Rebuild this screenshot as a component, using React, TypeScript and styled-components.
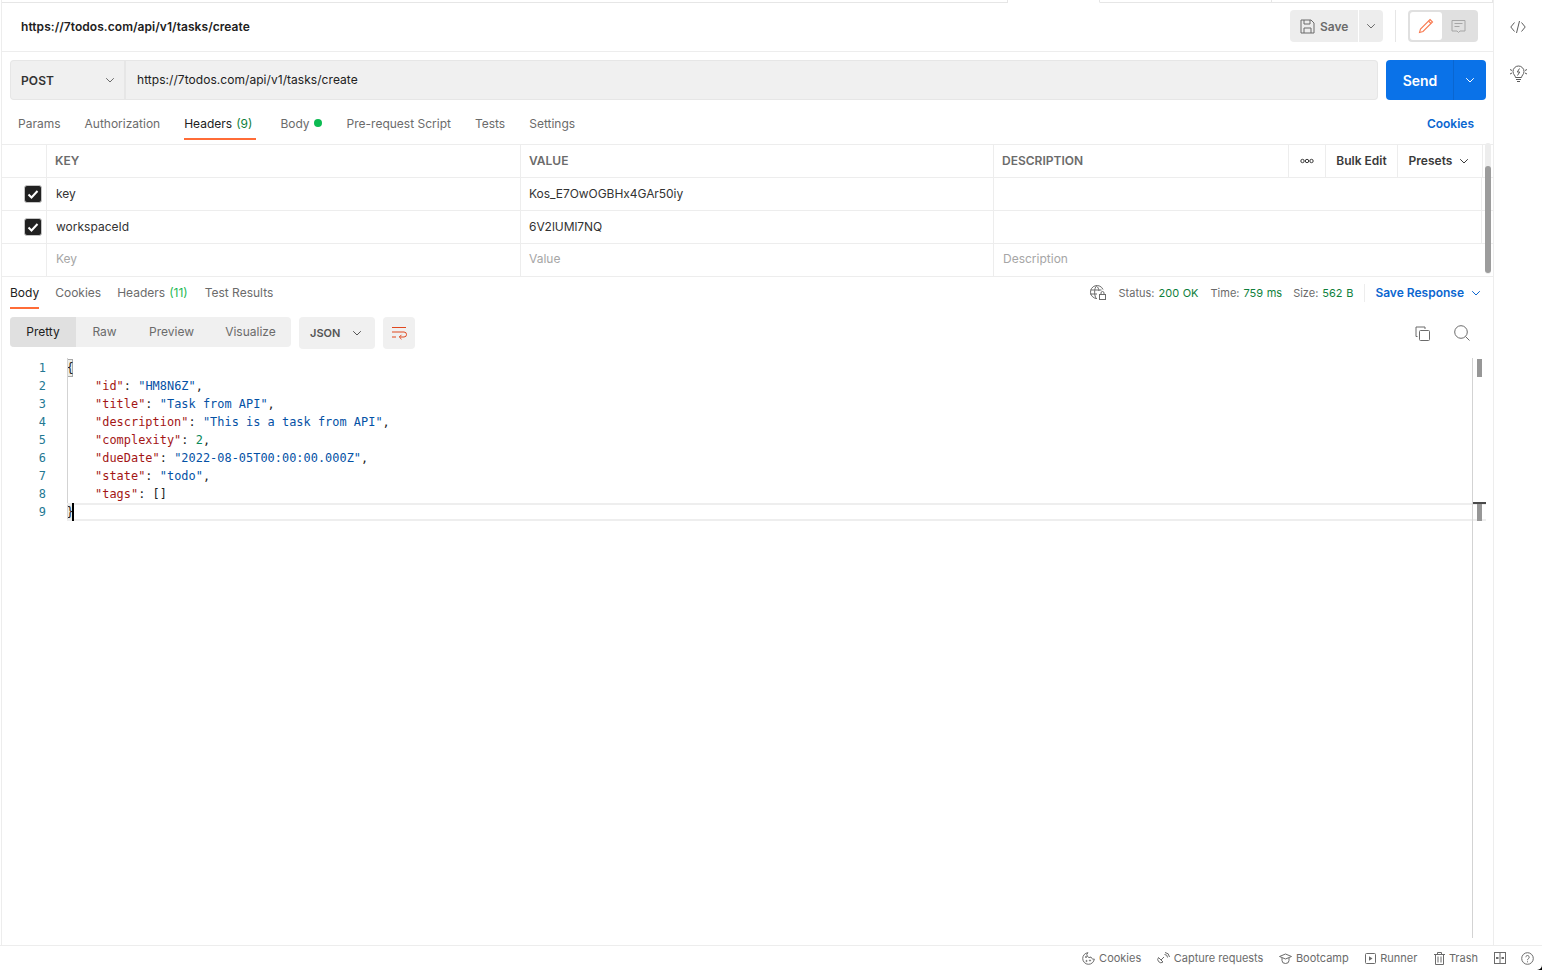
import * as React from 'react';
import styled, { createGlobalStyle } from 'styled-components';

const GlobalStyle = createGlobalStyle`
    html, body {
        margin: 0;
        padding: 0;
        background: #fff;
    }
    body {
        font-family: Inter, "Noto Sans", sans-serif;
        font-size: 12px;
        color: #212121;
        overflow: hidden;
    }
    * {
        box-sizing: border-box;
    }
    svg {
        display: block;
        flex: none;
    }
`;

const Page = styled.div`
    width: 1542px;
    height: 970px;
    display: flex;
    flex-direction: column;
    position: relative;
    overflow: hidden;
`;

const Main = styled.div`
    flex: 1;
    min-height: 0;
    display: flex;
`;

const Workspace = styled.div`
    flex: 1;
    min-width: 0;
    margin-left: 1px;
    border-left: 1px solid #ededed;
    border-right: 1px solid #ededed;
    display: flex;
    flex-direction: column;
`;

const Sidebar = styled.div`
    width: 48px;
    flex: none;
    display: flex;
    flex-direction: column;
    align-items: center;
    padding-top: 19px;
    gap: 30px;
    color: #5c5c5c;
`;

// Top strip: the open tabs just above the request, only their bottom edge is visible.
const TabStrip = styled.div`
    height: 3px;
    flex: none;
    display: flex;
`;

const StripTab = styled.div<{ $width: number; $active?: boolean }>`
    width: ${(p) => p.$width}px;
    flex: ${(p) => (p.$width ? 'none' : '1')};
    border-right: 1px solid #e6e6e6;
    border-bottom: 1px solid ${(p) => (p.$active ? 'transparent' : '#e6e6e6')};
`;

const RequestHeader = styled.div`
    height: 49px;
    flex: none;
    border-bottom: 1px solid #ededed;
    display: flex;
    align-items: center;
    padding: 0 15px 2px 19px;
`;

const RequestName = styled.div`
    flex: 1;
    font-weight: 600;
    font-size: 12px;
    letter-spacing: 0.05px;
    color: #212121;
`;

const SaveGroup = styled.div`
    display: flex;
    gap: 1px;
    height: 32px;
`;

const SaveButton = styled.div`
    width: 68px;
    display: flex;
    align-items: center;
    gap: 5px;
    padding-left: 10px;
    background: #ededed;
    border-radius: 4px 0 0 4px;
    color: #6b6b6b;
    font-weight: 600;
`;

const SaveArrow = styled.div`
    width: 24px;
    display: flex;
    align-items: center;
    justify-content: center;
    background: #ededed;
    border-radius: 0 4px 4px 0;
    color: #6b6b6b;
`;

const VerticalRule = styled.div<{ $height: number; $margin: string }>`
    width: 1px;
    height: ${(p) => p.$height}px;
    margin: ${(p) => p.$margin};
    background: #e6e6e6;
`;

const ModeSwitch = styled.div`
    width: 70px;
    height: 32px;
    padding: 2px;
    background: #e0e0e0;
    border-radius: 4px;
    display: flex;
`;

const ModeOption = styled.div<{ $active?: boolean }>`
    width: 32px;
    display: flex;
    align-items: center;
    justify-content: center;
    background: ${(p) => (p.$active ? '#fff' : 'transparent')};
    border-radius: 3px;
    color: ${(p) => (p.$active ? '#f87a50' : '#a6a6a6')};
`;

const UrlRow = styled.div`
    height: 48px;
    flex: none;
    padding: 8px 7px 0 8px;
    display: flex;
`;

const MethodSelect = styled.div`
    width: 116px;
    height: 40px;
    display: flex;
    align-items: center;
    justify-content: space-between;
    padding: 0 9px 0 10px;
    background: #f0f0f0;
    border: 1px solid #e6e6e6;
    border-right: 2px solid #e6e6e6;
    border-radius: 4px 0 0 4px;
    font-weight: 600;
    font-size: 12px;
    letter-spacing: 0.1px;
    color: #333;
    > svg {
        color: #6b6b6b;
    }
`;

const UrlInput = styled.div`
    flex: 1;
    height: 40px;
    display: flex;
    align-items: center;
    padding: 0 0 2px 11px;
    background: #f0f0f0;
    border: 1px solid #e6e6e6;
    border-left: 0;
    border-radius: 0 4px 4px 0;
    font-size: 12px;
    letter-spacing: 0.05px;
    color: #212121;
`;

const SendButton = styled.div`
    width: 100px;
    height: 40px;
    margin-left: 8px;
    display: flex;
    background: #0a72e8;
    border-radius: 4px;
    color: #fff;
`;

const SendLabel = styled.div`
    width: 68px;
    display: flex;
    align-items: center;
    justify-content: center;
    padding-left: 1px;
    font-size: 14px;
    font-weight: 600;
    border-right: 1px solid #0a66d0;
`;

const SendArrow = styled.div`
    flex: 1;
    display: flex;
    align-items: center;
    justify-content: center;
`;

const RequestTabs = styled.div`
    height: 45px;
    flex: none;
    display: flex;
    align-items: flex-start;
    padding: 0 19px 0 16px;
    gap: 24px;
    border-bottom: 1px solid #ededed;
`;

const Tab = styled.div<{ $active?: boolean }>`
    display: flex;
    align-items: center;
    padding-top: 6px;
    height: 40px;
    position: relative;
    color: ${(p) => (p.$active ? '#212121' : '#6b6b6b')};
    gap: 4px;
    white-space: nowrap;
`;

const TabUnderline = styled.div`
    position: absolute;
    left: 0;
    right: 0;
    bottom: 0;
    height: 2px;
    background: #ff6c37;
`;

const TabCount = styled.span<{ $bright?: boolean; $trail?: number }>`
    color: ${(p) => (p.$bright ? '#1db954' : '#0f7f3c')};
    margin-right: ${(p) => p.$trail ?? 0}px;
`;

const BodyDot = styled.span`
    width: 8px;
    height: 8px;
    margin-right: 1px;
    border-radius: 50%;
    background: #0cbb52;
`;

const TabLink = styled.div`
    margin-left: auto;
    height: 40px;
    padding-top: 6px;
    display: flex;
    align-items: center;
    color: #0a66d0;
    font-weight: 600;
`;

const TableArea = styled.div`
    height: 132px;
    flex: none;
    position: relative;
    border-bottom: 1px solid #ededed;
`;

const TableRow = styled.div<{ $columns: string }>`
    height: 33px;
    display: grid;
    grid-template-columns: ${(p) => p.$columns};
    border-bottom: 1px solid #ededed;
`;

const LastTableRow = styled(TableRow)`
    border-bottom: 0;
`;

const Cell = styled.div`
    display: flex;
    align-items: center;
    padding-left: 9px;
    padding-bottom: 2px;
    color: #333;
    border-right: 1px solid #ededed;
    white-space: nowrap;
`;

const EndCell = styled(Cell)`
    border-right: 0;
`;

const ValueCell = styled(Cell)`
    padding-left: 8px;
    letter-spacing: -0.05px;
`;

const CheckCell = styled(Cell)`
    justify-content: center;
    padding: 0 0 0 18px;
`;

const HeadCell = styled(Cell)`
    font-weight: 600;
    color: #6b6b6b;
    padding-left: 8px;
    padding-bottom: 1px;
`;

const HeadAction = styled(HeadCell)`
    color: #3a3a3a;
    justify-content: center;
    padding-left: 0;
    gap: 7px;
`;

const PresetAction = styled(HeadAction)`
    padding-right: 2px;
`;

const Placeholder = styled(Cell)`
    color: #a6a6a6;
    padding-bottom: 4px;
`;

const ValuePlaceholder = styled(Placeholder)`
    padding-left: 8px;
`;

const PlaceholderEnd = styled(Placeholder)`
    border-right: 0;
`;

const CheckBox = styled.div`
    width: 18px;
    height: 18px;
    border-radius: 3px;
    background: #212121;
    border: 1px solid #c4c4c4;
    display: flex;
    align-items: center;
    justify-content: center;
    color: #fff;
`;

const TableThumb = styled.div`
    position: absolute;
    right: 2px;
    top: -2px;
    bottom: 2px;
    width: 6px;
    background: #ededed;
    border-radius: 3px;
`;

const TableThumbFill = styled.div`
    position: absolute;
    left: 0;
    right: 0;
    top: 23px;
    bottom: 1px;
    background: #9c9c9c;
    border-radius: 3px;
`;

const ResponseHeader = styled.div`
    height: 32px;
    flex: none;
    display: flex;
    padding: 0 12px 0 8px;
    gap: 16px;
`;

const ResponseTab = styled.div<{ $active?: boolean }>`
    height: 32px;
    display: flex;
    align-items: center;
    padding-bottom: 2px;
    gap: 4px;
    position: relative;
    color: ${(p) => (p.$active ? '#212121' : '#6b6b6b')};
`;

const ResponseMeta = styled.div`
    margin-left: auto;
    display: flex;
    align-items: center;
    padding-bottom: 1px;
    font-size: 11px;
    color: #6b6b6b;
`;

const MetaItem = styled.span<{ $gap?: number }>`
    margin-right: ${(p) => p.$gap ?? 11}px;
    white-space: nowrap;
`;

const MetaValue = styled.span`
    color: #0f7f3c;
    margin-left: 4px;
    word-spacing: 0.5px;
`;

const SaveResponse = styled.div`
    display: flex;
    align-items: center;
    gap: 7px;
    padding-left: 10px;
    height: 18px;
    border-left: 1px solid #ededed;
    color: #0a66d0;
    font-size: 12px;
    font-weight: 600;
`;

const ViewBar = styled.div`
    height: 49px;
    flex: none;
    padding: 8px 23px 0 8px;
    display: flex;
    align-items: flex-start;
`;

const Segmented = styled.div`
    height: 30px;
    display: flex;
    background: #f0f0f0;
    border-radius: 4px;
    overflow: hidden;
`;

const Segment = styled.div<{ $active?: boolean; $width: number }>`
    width: ${(p) => p.$width}px;
    display: flex;
    align-items: center;
    justify-content: center;
    padding-bottom: 1px;
    background: ${(p) => (p.$active ? '#e0e0e0' : 'transparent')};
    color: ${(p) => (p.$active ? '#212121' : '#6b6b6b')};
`;

const FormatSelect = styled.div`
    width: 76px;
    height: 32px;
    margin-left: 8px;
    display: flex;
    align-items: center;
    justify-content: space-between;
    padding: 0 13px 0 11px;
    background: #f0f0f0;
    border-radius: 4px;
    font-size: 11px;
    font-weight: 600;
    color: #555;
`;

const WrapButton = styled.div`
    width: 32px;
    height: 32px;
    margin-left: 8px;
    display: flex;
    align-items: center;
    justify-content: center;
    background: #f0f0f0;
    border-radius: 4px;
    color: #e0481f;
`;

const ViewActions = styled.div`
    margin-left: auto;
    height: 32px;
    display: flex;
    align-items: center;
    gap: 24px;
    color: #6b6b6b;
`;

const Editor = styled.div`
    flex: 1;
    min-height: 0;
    position: relative;
    padding-bottom: 7px;
`;

const CodeLines = styled.div`
    font-family: "DejaVu Sans Mono", "Liberation Mono", monospace;
    font-size: 11.9px;
    letter-spacing: 0.03px;
    line-height: 18px;
    padding-top: 1px;
`;

const CodeLine = styled.div`
    height: 18px;
    display: flex;
    white-space: pre;
    color: #212121;
`;

const LineNumber = styled.div`
    width: 44px;
    flex: none;
    text-align: right;
    color: #237893;
`;

const LineText = styled.div<{ $indent?: boolean }>`
    margin-left: 20px;
    padding-left: ${(p) => (p.$indent ? '29px' : '0')};
    position: relative;
`;

const KeyToken = styled.span`
    color: #a31515;
`;

const StringToken = styled.span`
    color: #0451a5;
`;

const NumberToken = styled.span`
    color: #09885a;
`;

const BracketToken = styled.span`
    display: inline-block;
    width: 6px;
    height: 18px;
    margin-left: 1px;
    text-indent: -0.5px;
    background: #eceeea;
    box-shadow: inset 0 0 0 1px #a9a9a9;
    overflow: hidden;
    line-height: 18px;
`;

// Everything below sits over the code, the way the editor paints its own overlays.
const IndentGuide = styled.div`
    position: absolute;
    left: 65px;
    top: 0;
    width: 1px;
    height: 162px;
    background: #d3d3d3;
`;

const CurrentLine = styled.div`
    position: absolute;
    left: 65px;
    right: 7px;
    top: 145px;
    height: 18px;
    border-top: 2px solid #eee;
    border-bottom: 2px solid #eee;
`;

const Caret = styled.div`
    position: absolute;
    left: 70px;
    top: 145px;
    width: 2px;
    height: 18px;
    background: #000;
`;

const OverviewRuler = styled.div`
    position: absolute;
    left: 1470px;
    top: 0;
    bottom: 7px;
    width: 14px;
    border-left: 1px solid #d3d3d3;
`;

const RulerMark = styled.div<{ $top: number }>`
    position: absolute;
    left: 4px;
    top: ${(p) => p.$top}px;
    width: 5px;
    height: 18px;
    background: #979797;
`;

const RulerCursor = styled.div`
    position: absolute;
    left: 0;
    right: 0;
    top: 144px;
    height: 2px;
    background: #4a4a4a;
`;

const StatusBar = styled.div`
    height: 25px;
    flex: none;
    border-top: 1px solid #ededed;
    display: flex;
    align-items: center;
    justify-content: flex-end;
    padding: 0 8px 0 0;
    gap: 15.5px;
    font-size: 11px;
    color: #6b6b6b;
`;

const StatusItem = styled.div`
    display: flex;
    align-items: center;
    gap: 4px;
    white-space: nowrap;
`;

const WindowCorner = styled.div`
    position: absolute;
    right: 0;
    bottom: 0;
    width: 5px;
    height: 5px;
    background: #000;
    clip-path: path('M5 0 A5 5 0 0 1 0 5 L5 5 Z');
`;

const Chevron = ({ size = 10 }: { size?: number }) => (
    <svg width={size} height={size} viewBox="0 0 10 10" fill="none" stroke="currentColor" strokeWidth="1">
        <path d="M1.2 3.2 5 7l3.8-3.8" />
    </svg>
);

const FileIcon = () => (
    <svg width="15" height="15" viewBox="0 0 15 15" fill="none" stroke="currentColor" strokeWidth="1">
        <path d="M1 1h10l3 3v10H1z" />
        <path d="M4 1v4h6V1M4 14V9h7v5" />
    </svg>
);

const PencilIcon = () => (
    <svg width="16" height="16" viewBox="0 0 16 16" fill="none" stroke="currentColor" strokeWidth="1.1">
        <path d="M12 1.5 14.5 4 5 13.5 1.5 14.5 2.5 11z" />
        <path d="M10.5 3 13 5.5" />
    </svg>
);

const CommentIcon = () => (
    <svg width="15" height="15" viewBox="0 0 15 15" fill="none" stroke="currentColor" strokeWidth="1">
        <path d="M1 1.5h13v10.5H9l-1.5 1.5L6 12H1z" />
        <path d="M3.5 4.5h8M3.5 7.5h5" />
    </svg>
);

const CodeIcon = () => (
    <svg width="16" height="16" viewBox="0 0 16 16" fill="none" stroke="currentColor" strokeWidth="1">
        <path d="M4.5 3.5.8 8l3.7 4.5M11.5 3.5 15.2 8l-3.700 4.500M9.500 2 6.500 14" />
    </svg>
);

const BulbIcon = () => (
    <svg width="17" height="17" viewBox="0 0 17 17" fill="none" stroke="currentColor" strokeWidth="1">
        <path d="M5.5 12.5c0-2-2.500-3-2.500-6a5.500 5.500 0 0 1 11 0c0 3-2.500 4-2.500 6z" />
        <path d="M6 14.500h5M7 16.500h3" />
        <path d="M9.500 3.500 7.300 7h2.400L7.500 10.500" />
        <path d="M0 4.500l2 1M0 9l2-1M17 4.500l-2 1M17 9l-2-1" />
    </svg>
);

const CheckIcon = () => (
    <svg width="12" height="12" viewBox="0 0 12 12" fill="none" stroke="currentColor" strokeWidth="2">
        <path d="M1.5 6.500 4.500 9.500 10.500 3" />
    </svg>
);

const DotsIcon = () => (
    <svg width="14" height="6" viewBox="0 0 14 6" fill="none" stroke="currentColor" strokeWidth="1">
        <circle cx="2.5" cy="3" r="1.7" />
        <circle cx="7" cy="3" r="1.7" />
        <circle cx="11.5" cy="3" r="1.7" />
    </svg>
);

const GlobeLockIcon = () => (
    <svg width="17" height="15" viewBox="0 0 17 15" fill="none" stroke="currentColor" strokeWidth="1">
        <path d="M8 13.500a6.500 6.500 0 1 1 6-9" />
        <path d="M7.500 1C5 3 5 11 7.500 14M7.500 1c1.500 1 2.300 3 2.500 5M1.500 5h11M1 9h7" />
        <rect x="10.5" y="9.5" width="6" height="5" />
        <path d="M12 9.500V8a1.500 1.500 0 0 1 3 0v1.500" />
    </svg>
);

const WrapIcon = () => (
    <svg width="16" height="14" viewBox="0 0 16 14" fill="none" stroke="currentColor" strokeWidth="1">
        <path d="M1 1.500h14M1 6h12a2.300 2.300 0 0 1 0 5H8.500M1 11h4" />
        <path d="M10.500 8.800 8.300 11l2.200 2.200" />
    </svg>
);

const CopyIcon = () => (
    <svg width="15" height="15" viewBox="0 0 15 15" fill="none" stroke="currentColor" strokeWidth="1">
        <path d="M2.500 10.500H1V1h9v2" />
        <rect x="4.5" y="4.5" width="10" height="10" rx="1" />
    </svg>
);

const SearchIcon = () => (
    <svg width="16" height="16" viewBox="0 0 16 16" fill="none" stroke="currentColor" strokeWidth="1">
        <circle cx="7" cy="7" r="6.3" />
        <path d="M11.500 11.500 15.500 15.500" />
    </svg>
);

const CookieIcon = () => (
    <svg width="13" height="13" viewBox="0 0 13 13" fill="none" stroke="currentColor" strokeWidth="1">
        <path d="M6 .7A5.800 5.800 0 1 0 12.300 7 2.500 2.500 0 0 1 9 5 2.500 2.500 0 0 1 6 .7z" />
        <circle cx="4" cy="5" r=".6" />
        <circle cx="4.5" cy="9" r=".6" />
        <circle cx="8" cy="8.5" r=".6" />
    </svg>
);

const CaptureIcon = () => (
    <svg width="13" height="13" viewBox="0 0 13 13" fill="none" stroke="currentColor" strokeWidth="1">
        <path d="M1.500 5.500 6 10a3.200 3.200 0 0 1-4.500-4.500z" />
        <path d="M4 8 7 5M7.500 2.500a3 3 0 0 1 3 3M8 .5a5 5 0 0 1 4.500 4.500" />
    </svg>
);

const CapIcon = () => (
    <svg width="13" height="13" viewBox="0 0 13 13" fill="none" stroke="currentColor" strokeWidth="1">
        <path d="M.5 4.500 6.500 2l6 2.500-6 2.500z" />
        <path d="M3 6v2.500a3.500 3 0 0 0 7 0V6" />
    </svg>
);

const RunnerIcon = () => (
    <svg width="12" height="11" viewBox="0 0 12 11" fill="none" stroke="currentColor" strokeWidth="1">
        <rect x="1.5" y=".5" width="10" height="10" rx="1" />
        <path d="M5 3.300 8.500 5.500 5 7.700z" fill="currentColor" stroke="none" />
    </svg>
);

const TrashIcon = () => (
    <svg width="12" height="13" viewBox="0 0 12 13" fill="none" stroke="currentColor" strokeWidth="1">
        <path d="M1 2.500h11M4.500 2.500V.5h4v2M2.500 2.500v10h8v-10M5 4.500v6M8 4.500v6" />
    </svg>
);

const PaneIcon = () => (
    <svg width="12" height="12" viewBox="0 0 12 12" fill="none" stroke="currentColor" strokeWidth="1">
        <rect x=".5" y=".5" width="11" height="11" />
        <path d="M6 .5v11" />
        <path d="M2 6h2.500M7.500 6H10" strokeWidth="2" />
    </svg>
);

const HelpIcon = () => (
    <svg width="13" height="13" viewBox="0 0 13 13" fill="none" stroke="currentColor" strokeWidth="1">
        <circle cx="6.5" cy="6.5" r="5.8" />
        <path d="M4.800 5.200a1.700 1.700 0 1 1 2.700 1.400c-.7.500-1 .8-1 1.600" />
        <path d="M6.500 9.300v1" />
    </svg>
);

const tableColumns = '45px 474px 473px 295px 37px 72px 85px 10px';
const bodyColumns = '45px 474px 473px 488px 10px';

const headers = [
    { key: 'key', value: 'Kos_E7OwOGBHx4GAr50iy' },
    { key: 'workspaceId', value: '6V2lUMl7NQ' },
];

const jsonLines: [string, React.ReactNode, string?][] = [
    ['id', <StringToken>"HM8N6Z"</StringToken>, ','],
    ['title', <StringToken>"Task from API"</StringToken>, ','],
    ['description', <StringToken>"This is a task from API"</StringToken>, ','],
    ['complexity', <NumberToken>2</NumberToken>, ','],
    ['dueDate', <StringToken>"2022-08-05T00:00:00.000Z"</StringToken>, ','],
    ['state', <StringToken>"todo"</StringToken>, ','],
    ['tags', '[]'],
];

const footerItems = [
    { icon: <CookieIcon />, label: 'Cookies' },
    { icon: <CaptureIcon />, label: 'Capture requests' },
    { icon: <CapIcon />, label: 'Bootcamp' },
    { icon: <RunnerIcon />, label: 'Runner' },
    { icon: <TrashIcon />, label: 'Trash' },
];

export default function App() {
    return (
        <Page>
            <GlobalStyle />
            <Main>
                <Workspace>
                    <TabStrip>
                        <StripTab $width={1006} />
                        <StripTab $width={92} $active />
                        <StripTab $width={172} />
                        <StripTab $width={0} />
                    </TabStrip>

                    <RequestHeader>
                        <RequestName>https://7todos.com/api/v1/tasks/create</RequestName>
                        <SaveGroup>
                            <SaveButton>
                                <FileIcon />
                                Save
                            </SaveButton>
                            <SaveArrow>
                                <Chevron />
                            </SaveArrow>
                        </SaveGroup>
                        <VerticalRule $height={32} $margin="0 12px" />
                        <ModeSwitch>
                            <ModeOption $active>
                                <PencilIcon />
                            </ModeOption>
                            <ModeOption>
                                <CommentIcon />
                            </ModeOption>
                        </ModeSwitch>
                    </RequestHeader>

                    <UrlRow>
                        <MethodSelect>
                            POST
                            <Chevron />
                        </MethodSelect>
                        <UrlInput>https://7todos.com/api/v1/tasks/create</UrlInput>
                        <SendButton>
                            <SendLabel>Send</SendLabel>
                            <SendArrow>
                                <Chevron />
                            </SendArrow>
                        </SendButton>
                    </UrlRow>

                    <RequestTabs>
                        <Tab>Params</Tab>
                        <Tab>Authorization</Tab>
                        <Tab $active>
                            Headers <TabCount $trail={4}>(9)</TabCount>
                            <TabUnderline />
                        </Tab>
                        <Tab>
                            Body <BodyDot />
                        </Tab>
                        <Tab>Pre-request Script</Tab>
                        <Tab>Tests</Tab>
                        <Tab>Settings</Tab>
                        <TabLink>Cookies</TabLink>
                    </RequestTabs>

                    <TableArea>
                        <TableRow $columns={tableColumns}>
                            <Cell />
                            <HeadCell>KEY</HeadCell>
                            <HeadCell>VALUE</HeadCell>
                            <HeadCell>DESCRIPTION</HeadCell>
                            <HeadAction>
                                <DotsIcon />
                            </HeadAction>
                            <HeadAction>Bulk Edit</HeadAction>
                            <PresetAction>
                                Presets
                                <Chevron />
                            </PresetAction>
                            <EndCell />
                        </TableRow>
                        {headers.map((header) => (
                            <TableRow $columns={bodyColumns} key={header.key}>
                                <CheckCell>
                                    <CheckBox>
                                        <CheckIcon />
                                    </CheckBox>
                                </CheckCell>
                                <Cell>{header.key}</Cell>
                                <ValueCell>{header.value}</ValueCell>
                                <Cell />
                                <EndCell />
                            </TableRow>
                        ))}
                        <LastTableRow $columns={bodyColumns}>
                            <Cell />
                            <Placeholder>Key</Placeholder>
                            <ValuePlaceholder>Value</ValuePlaceholder>
                            <PlaceholderEnd>Description</PlaceholderEnd>
                            <EndCell />
                        </LastTableRow>
                        <TableThumb>
                            <TableThumbFill />
                        </TableThumb>
                    </TableArea>

                    <ResponseHeader>
                        <ResponseTab $active>
                            Body
                            <TabUnderline />
                        </ResponseTab>
                        <ResponseTab>Cookies</ResponseTab>
                        <ResponseTab>
                            Headers <TabCount $bright $trail={1}>(11)</TabCount>
                        </ResponseTab>
                        <ResponseTab>Test Results</ResponseTab>
                        <ResponseMeta>
                            <MetaItem $gap={13}>
                                <GlobeLockIcon />
                            </MetaItem>
                            <MetaItem $gap={12}>
                                Status:<MetaValue>200 OK</MetaValue>
                            </MetaItem>
                            <MetaItem>
                                Time:<MetaValue>759 ms</MetaValue>
                            </MetaItem>
                            <MetaItem>
                                Size:<MetaValue>562 B</MetaValue>
                            </MetaItem>
                            <SaveResponse>
                                Save Response
                                <Chevron />
                            </SaveResponse>
                        </ResponseMeta>
                    </ResponseHeader>

                    <ViewBar>
                        <Segmented>
                            <Segment $active $width={66}>Pretty</Segment>
                            <Segment $width={57}>Raw</Segment>
                            <Segment $width={77}>Preview</Segment>
                            <Segment $width={81}>Visualize</Segment>
                        </Segmented>
                        <FormatSelect>
                            JSON
                            <Chevron />
                        </FormatSelect>
                        <WrapButton>
                            <WrapIcon />
                        </WrapButton>
                        <ViewActions>
                            <CopyIcon />
                            <SearchIcon />
                        </ViewActions>
                    </ViewBar>

                    <Editor>
                        <CodeLines>
                            <CodeLine>
                                <LineNumber>1</LineNumber>
                                <LineText>
                                    <BracketToken>{'{'}</BracketToken>
                                </LineText>
                            </CodeLine>
                            {jsonLines.map(([key, value, tail], index) => (
                                <CodeLine key={key}>
                                    <LineNumber>{index + 2}</LineNumber>
                                    <LineText $indent>
                                        <KeyToken>"{key}"</KeyToken>: {value}
                                        {tail}
                                    </LineText>
                                </CodeLine>
                            ))}
                            <CodeLine>
                                <LineNumber>9</LineNumber>
                                <LineText>
                                    <BracketToken>{'}'}</BracketToken>
                                </LineText>
                            </CodeLine>
                        </CodeLines>
                        <IndentGuide />
                        <CurrentLine />
                        <Caret />
                        <OverviewRuler>
                            <RulerMark $top={1} />
                            <RulerMark $top={145} />
                            <RulerCursor />
                        </OverviewRuler>
                    </Editor>
                </Workspace>

                <Sidebar>
                    <CodeIcon />
                    <BulbIcon />
                </Sidebar>
            </Main>

            <StatusBar>
                {footerItems.map((item) => (
                    <StatusItem key={item.label}>
                        {item.icon}
                        {item.label}
                    </StatusItem>
                ))}
                <PaneIcon />
                <HelpIcon />
            </StatusBar>
            <WindowCorner />
        </Page>
    );
}
